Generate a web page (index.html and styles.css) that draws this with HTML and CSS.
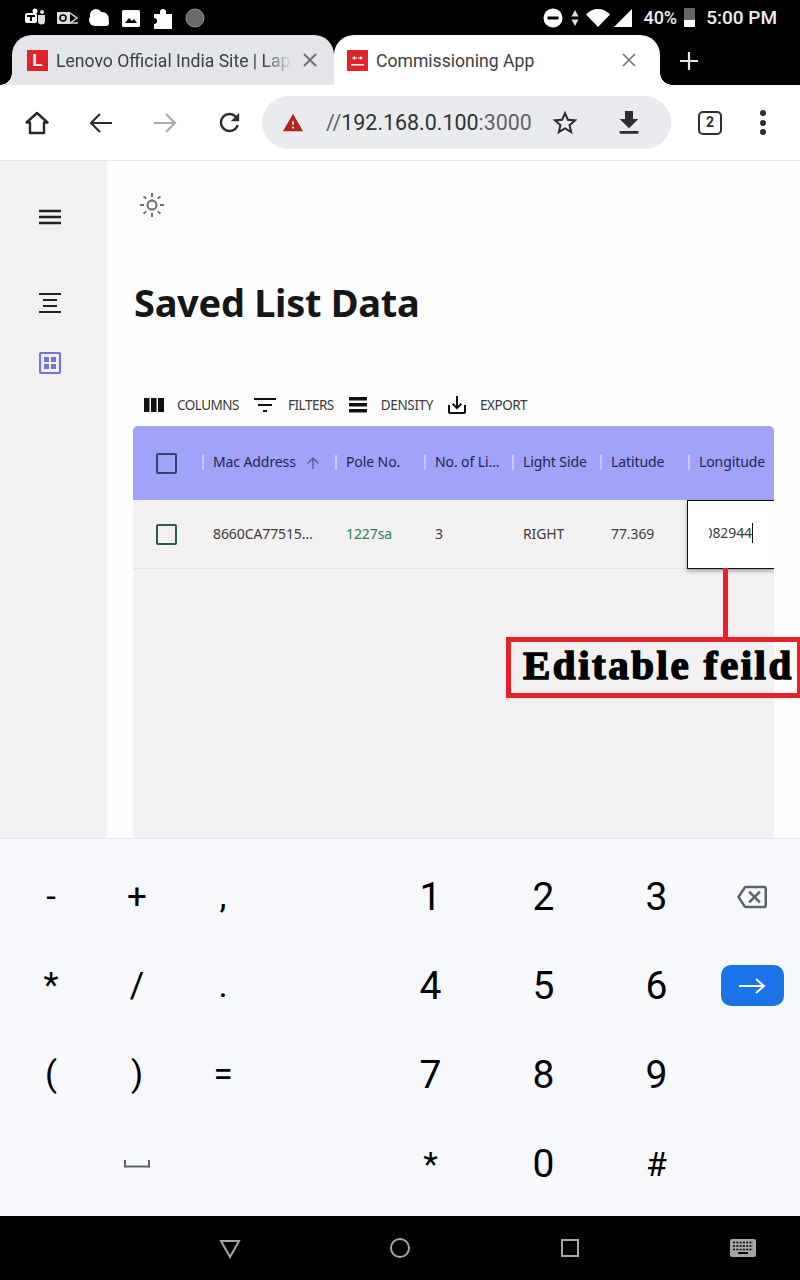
FILE: index.html
```html
<!DOCTYPE html>
<html lang="en">
<head>
    <meta charset="UTF-8">
    <meta name="viewport" content="width=device-width, initial-scale=1.0">
    <title>Commissioning App</title>
    <link rel="stylesheet" href="styles.css">
</head>
<body>
    <!-- Android status bar -->
    <header class="status-bar">
        <svg class="status-icon" viewBox="0 0 22 22"><rect x="1" y="6" width="12" height="10" rx="2" fill="#fff"/><circle cx="11" cy="4" r="2.5" fill="#fff"/><path d="M14 8h7v6a3.500 3.500 0 0 1-7 0z" fill="#ddd"/><circle cx="18" cy="5" r="2" fill="#ddd"/><rect x="3" y="8" width="8" height="2" fill="#000"/><rect x="6" y="8" width="2" height="6" fill="#000"/></svg>
        <svg class="status-icon" viewBox="0 0 22 22"><rect x="1" y="5" width="13" height="12" fill="#ddd"/><circle cx="7" cy="11" r="3" fill="none" stroke="#000" stroke-width="1.500"/><path d="M14 6l7 5-7 5" fill="none" stroke="#ddd" stroke-width="1.500"/><path d="M14 16h8" stroke="#ddd" stroke-width="1.500"/></svg>
        <svg class="status-icon" viewBox="0 0 22 22"><circle cx="8" cy="8" r="6" fill="#fff"/><circle cx="7" cy="13" r="6" fill="#fff"/><circle cx="14" cy="12" r="7" fill="#fff"/><rect x="7" y="13" width="14" height="6" rx="3" fill="#fff"/></svg>
        <svg class="status-icon" viewBox="0 0 22 22"><rect x="2" y="3" width="18" height="17" rx="1.500" fill="#fff"/><path d="M5 16l4-5 3 3 2-2 3 4z" fill="#000"/></svg>
        <svg class="status-icon" viewBox="0 0 22 22"><path d="M2 7h6V5a3 3 0 0 1 6 0v2h6v15H2v-5a3 3 0 0 0 0-6z" fill="#fff"/></svg>
        <svg class="status-icon" viewBox="0 0 22 22"><circle cx="11" cy="11" r="9" fill="#6a6a6a" stroke="#9a9a9a" stroke-width="1"/></svg>
        <div class="status-right">
            <svg class="dnd" viewBox="0 0 20 20"><circle cx="10" cy="10" r="9.500" fill="#fff"/><rect x="4.500" y="8.500" width="11" height="3" fill="#000"/></svg>
            <svg class="updown" viewBox="0 0 8 16"><path d="M4 0l3.500 6.500h-7zM4 16L.5 9.500h7z" fill="#ddd"/></svg>
            <svg class="wifi" viewBox="0 0 24 18"><path d="M0 5.500C3 2 7.500 0 12 0s9 2 12 5.500L12 18z" fill="#fff"/></svg>
            <svg class="signal" viewBox="0 0 18 18"><path d="M18 0v18H0z" fill="#fff"/></svg>
            <span class="battery-text">40%</span>
            <div class="battery"><div class="battery-empty"></div></div>
            <span class="clock">5:00 PM</span>
        </div>
    </header>

    <!-- Chrome tabs -->
    <nav class="tab-strip">
        <div class="tab">
            <span class="favicon">L</span>
            <span class="tab-title">Lenovo Official India Site | Lap</span>
            <svg class="tab-close" viewBox="0 0 16 16"><path d="M2 2l12 12M14 2L2 14" stroke="#6f7276" stroke-width="2"/></svg>
        </div>
        <div class="tab tab-active">
            <span class="favicon"><svg viewBox="0 0 21 21" width="21" height="21"><path d="M5 8l3-2v1.500h2v1H8V10zM16 8l-3-2v1.500h-2v1h2V10z" fill="#fff"/><rect x="4" y="14" width="13" height="1.500" fill="#fff"/></svg></span>
            <span class="tab-title">Commissioning App</span>
            <svg class="tab-close" viewBox="0 0 16 16"><path d="M2 2l12 12M14 2L2 14" stroke="#6f7276" stroke-width="1.600"/></svg>
        </div>
        <svg class="new-tab" viewBox="0 0 20 20"><path d="M10 1v18M1 10h18" stroke="#e8e8e8" stroke-width="2.200"/></svg>
    </nav>

    <!-- Chrome toolbar -->
    <div class="toolbar">
        <div class="tool-btn"><svg viewBox="0 0 26 26" width="26" height="26"><path d="M13 3L2.500 12.500H6V23h14V12.500h3.500z" fill="none" stroke="#26282b" stroke-width="2.400" stroke-linejoin="round"/></svg></div>
        <div class="tool-btn"><svg viewBox="0 0 24 24" width="24" height="24"><path d="M23 12H3M11 3l-9 9 9 9" fill="none" stroke="#2b2d30" stroke-width="2.200"/></svg></div>
        <div class="tool-btn"><svg viewBox="0 0 24 24" width="24" height="24"><path d="M1 12h20M13 3l9 9-9 9" fill="none" stroke="#a9abad" stroke-width="2.200"/></svg></div>
        <div class="tool-btn"><svg viewBox="0 0 24 24" width="29" height="29"><path d="M17.650 6.350C16.200 4.900 14.210 4 12 4c-4.420 0-7.990 3.580-7.990 8s3.570 8 7.990 8c3.730 0 6.840-2.550 7.730-6h-2.080c-.82 2.330-3.040 4-5.650 4-3.310 0-6-2.690-6-6s2.690-6 6-6c1.660 0 3.140.69 4.220 1.780L13 11h7V4l-2.350 2.350z" fill="#2b2d30"/></svg></div>
        <div class="url-pill">
            <svg class="url-warning" viewBox="0 0 24 24"><path d="M1 21h22L12 2 1 21zm12-3h-2v-2h2v2zm0-4h-2v-4h2v4z" fill="#b3261e"/></svg>
            <span class="url-text"><span class="url-dim">//</span>192.168.0.100<span class="url-dim">:3000</span></span>
            <svg class="url-star" viewBox="0 0 24 24"><path d="M22 9.240l-7.190-.62L12 2 9.190 8.630 2 9.240l5.460 4.730L5.820 21 12 17.270 18.180 21l-1.630-7.030L22 9.240zM12 15.400l-3.760 2.270 1-4.280-3.320-2.880 4.380-.38L12 6.100l1.710 4.040 4.380.38-3.320 2.880 1 4.280L12 15.400z" fill="#2b2d30"/></svg>
            <svg class="url-download" viewBox="0 0 24 24"><path d="M19 9h-4V3H9v6H5l7 7 7-7zM5 18v2h14v-2H5z" fill="#2b2d30"/></svg>
        </div>
        <div class="tab-count-btn"><span class="tab-count">2</span></div>
        <div class="dots"><i></i><i></i><i></i></div>
    </div>

    <!-- Page -->
    <div class="app">
        <aside class="sidebar">
            <svg class="side-icon side-menu" viewBox="0 0 22 16"><path d="M0 2h22M0 8h22M0 14h22" stroke="#222" stroke-width="2.400"/></svg>
            <svg class="side-icon side-list" viewBox="0 0 22 22"><path d="M0 2h22M4 8h14M4 14h14M0 20h22" stroke="#222" stroke-width="2.200"/></svg>
            <svg class="side-icon side-grid" viewBox="0 0 22 22"><rect x="1" y="1" width="20" height="20" rx="1.500" fill="none" stroke="#6f74dc" stroke-width="2.200"/><rect x="5" y="5" width="5" height="5" fill="#6f74dc"/><rect x="12" y="5" width="5" height="5" fill="#6f74dc"/><rect x="5" y="12" width="5" height="5" fill="#6f74dc"/><rect x="12" y="12" width="5" height="5" fill="#6f74dc"/></svg>
        </aside>
        <main class="content">
            <svg class="sun" viewBox="0 0 26 26"><circle cx="13" cy="13" r="4.500" fill="none" stroke="#6d6d6d" stroke-width="2"/><path d="M13 1v4M13 21v4M1 13h4M21 13h4M4.500 4.500l2.800 2M21.500 4.500l-2.800 2M4.500 21.500l2.800-2M21.500 21.500l-2.800-2" stroke="#6d6d6d" stroke-width="2"/></svg>
            <h1>Saved List Data</h1>
            <div class="grid-tools">
                <div class="grid-tool">
                    <svg viewBox="0 0 20 14" width="20" height="14"><path d="M0 0h5.500v14H0zM7 0h5.500v14H7zM14 0h6v14h-6z" fill="#111"/></svg>
                    <span>COLUMNS</span>
                </div>
                <div class="grid-tool grid-tool-filters">
                    <svg viewBox="0 0 22 14" width="22" height="14"><path d="M0 0h22v2H0zM4 6h14v2H4zM9 12h4v2H9z" fill="#111"/></svg>
                    <span>FILTERS</span>
                </div>
                <div class="grid-tool grid-tool-density">
                    <svg viewBox="0 0 18 16" width="18" height="16"><path d="M0 0h18v3.500H0zM0 6h18v3.500H0zM0 12h18v3.500H0z" fill="#111"/></svg>
                    <span>DENSITY</span>
                </div>
                <div class="grid-tool grid-tool-export">
                    <svg viewBox="0 0 24 24" width="24" height="24"><path d="M19 12v7H5v-7H3v7c0 1.100.9 2 2 2h14c1.100 0 2-.9 2-2v-7h-2zm-6 .67l2.590-2.580L17 11.500l-5 5-5-5 1.410-1.410L11 12.670V3h2z" fill="#111"/></svg>
                    <span>EXPORT</span>
                </div>
            </div>

            <div class="data-grid">
                <div class="grid-row grid-head">
                    <div class="cell cell-check"><span class="checkbox"></span></div>
                    <div class="cell head-cell">Mac Address
                        <svg class="sort-arrow" viewBox="0 0 24 24"><path d="M4 12l1.410 1.410L11 7.830V20h2V7.830l5.580 5.590L20 12l-8-8-8 8z" fill="#5d6099"/></svg>
                    </div>
                    <div class="cell head-cell">Pole No.</div>
                    <div class="cell head-cell">No. of Li…</div>
                    <div class="cell head-cell">Light Side</div>
                    <div class="cell head-cell">Latitude</div>
                    <div class="cell head-cell">Longitude</div>
                </div>
                <div class="grid-row grid-body-row">
                    <div class="cell cell-check"><span class="checkbox checkbox-green"></span></div>
                    <div class="cell">8660CA77515…</div>
                    <div class="cell cell-link">1227sa</div>
                    <div class="cell">3</div>
                    <div class="cell">RIGHT</div>
                    <div class="cell">77.369</div>
                    <div class="cell cell-edit"><div class="edit-clip"><span class="edit-value">082944</span></div></div>
                </div>
            </div>
        </main>

        <!-- Annotation over the screenshot -->
        <div class="note-line"></div>
        <div class="note-box">Editable feild</div>
    </div>

    <!-- On-screen keyboard -->
    <section class="keyboard">
        <div class="key sym">-</div>
        <div class="key sym">+</div>
        <div class="key sym">,</div>
        <div class="key-gap"></div>
        <div class="key num">1</div>
        <div class="key num">2</div>
        <div class="key num">3</div>
        <div class="key"><svg class="backspace" viewBox="0 0 24 24"><path d="M22 3H7c-.69 0-1.230.35-1.590.88L0 12l5.410 8.110c.36.53.9.89 1.590.89h15c1.100 0 2-.9 2-2V5c0-1.100-.9-2-2-2zm0 16H7.070L2.400 12l4.660-7H22v14zm-11.590-2L14 13.410 17.590 17 19 15.590 15.410 12 19 8.410 17.590 7 14 10.590 10.410 7 9 8.410 12.590 12 9 15.590z" fill="#5f6368"/></svg></div>

        <div class="key sym">*</div>
        <div class="key sym">/</div>
        <div class="key sym">.</div>
        <div class="key-gap"></div>
        <div class="key num">4</div>
        <div class="key num">5</div>
        <div class="key num">6</div>
        <div class="key"><div class="enter-key"><svg viewBox="0 0 28 18" width="28" height="18"><path d="M1 9h25M18 2l8 7-8 7" fill="none" stroke="#fff" stroke-width="2"/></svg></div></div>

        <div class="key sym">(</div>
        <div class="key sym">)</div>
        <div class="key sym">=</div>
        <div class="key-gap"></div>
        <div class="key num">7</div>
        <div class="key num">8</div>
        <div class="key num">9</div>
        <div class="key"></div>

        <div class="key"></div>
        <div class="key"><svg class="space-bar" viewBox="0 0 26 8"><path d="M1 0v6.500h24V0" fill="none" stroke="#5f6368" stroke-width="2"/></svg></div>
        <div class="key"></div>
        <div class="key-gap"></div>
        <div class="key sym-big">*</div>
        <div class="key num">0</div>
        <div class="key sym-big">#</div>
        <div class="key"></div>
    </section>

    <!-- Android nav bar -->
    <footer class="nav-bar">
        <svg class="nav-icon" viewBox="0 0 22 22"><path d="M2 4h18L11 20z" fill="none" stroke="#a6a6a6" stroke-width="2"/></svg>
        <svg class="nav-icon" viewBox="0 0 22 22"><circle cx="11" cy="11" r="9" fill="none" stroke="#a6a6a6" stroke-width="2"/></svg>
        <svg class="nav-icon" viewBox="0 0 22 22"><rect x="3" y="3" width="16" height="16" fill="none" stroke="#a6a6a6" stroke-width="2"/></svg>
        <svg class="nav-keyboard" viewBox="0 0 26 18"><rect width="26" height="18" rx="2" fill="#a6a6a6"/><path d="M3 3.500h20M3 7h20M3 10.500h20" stroke="#000" stroke-width="1.500" stroke-dasharray="2 1.300"/><rect x="8" y="13" width="10" height="2" fill="#000"/></svg>
    </footer>
</body>
</html>
```

FILE: styles.css
```css
/* Stile globale */
* {
    box-sizing: border-box;
}
html, body {
    margin: 0;
    padding: 0;
}
body {
    width: 800px;
    height: 1280px;
    overflow: hidden;
    display: flex;
    flex-direction: column;
    font-family: "Noto Sans", sans-serif;
    background-color: #fff;
    color: #222;
}

/* Status bar */
.status-bar {
    height: 35px;
    flex: none;
    background-color: #000;
    display: flex;
    align-items: center;
    gap: 10px;
    padding-left: 24px;
    color: #eee;
    font-family: Roboto, sans-serif;
}
.status-icon {
    width: 22px;
    height: 22px;
}
.status-right {
    margin-left: auto;
    display: flex;
    align-items: center;
    padding-right: 23px;
}
.dnd {
    width: 20px;
    height: 20px;
}
.updown {
    width: 8px;
    height: 16px;
    margin-left: 8px;
}
.wifi {
    width: 24px;
    height: 18px;
    margin-left: 7px;
}
.signal {
    width: 18px;
    height: 18px;
    margin-left: 4px;
}
.battery-text {
    font-size: 18px;
    font-weight: 500;
    margin-left: 11px;
}
.battery {
    width: 11px;
    height: 19px;
    margin-left: 7px;
    background-color: #fff;
    border-radius: 1px;
}
.battery-empty {
    height: 12px;
    background-color: #666;
}
.clock {
    font-size: 19px;
    font-weight: 500;
    margin-left: 11px;
}

/* Tabs */
.tab-strip {
    height: 50px;
    flex: none;
    background-color: #000;
    display: flex;
    padding-left: 12px;
}
.tab {
    position: relative;
    width: 322px;
    display: flex;
    align-items: center;
    padding: 0 16px 0 15px;
    background-color: #e3e5e8;
    border-radius: 20px 20px 0 0;
    font-family: Roboto, sans-serif;
    font-size: 17.600px;
    color: #3c4043;
}
.tab::before {
    content: "";
    position: absolute;
    left: -12px;
    bottom: 0;
    width: 12px;
    height: 12px;
    background: radial-gradient(circle at 0 0, transparent 11.500px, #e3e5e8 12px);
}
.tab-active {
    width: 326px;
    padding: 0 23px 0 13px;
    background-color: #fff;
}
.tab-active::before {
    display: none;
}
.tab-active::after {
    content: "";
    position: absolute;
    right: -12px;
    bottom: 0;
    width: 12px;
    height: 12px;
    background: radial-gradient(circle at 100% 0, transparent 11.500px, #fff 12px);
}
.favicon {
    width: 21px;
    height: 21px;
    flex: none;
    background-color: #e1232a;
    color: #fff;
    font-family: "Liberation Sans", sans-serif;
    font-weight: bold;
    font-size: 17px;
    line-height: 21px;
    text-align: center;
}
.tab-title {
    flex: 1;
    margin: 2px 10px 0 8px;
    white-space: nowrap;
    -webkit-mask-image: linear-gradient(to right, #000 88%, transparent 100%);
}
.tab-active .tab-title {
    -webkit-mask-image: none;
}
.tab-close {
    width: 16px;
    height: 16px;
    flex: none;
}
.new-tab {
    width: 20px;
    height: 20px;
    align-self: center;
    margin: 2px 0 0 19px;
}

/* Toolbar */
.toolbar {
    height: 76px;
    flex: none;
    display: flex;
    align-items: center;
    padding-left: 5px;
    border-bottom: 1px solid #e6e6e6;
    background-color: #fff;
}
.tool-btn {
    width: 64px;
    display: flex;
    justify-content: center;
}
.url-pill {
    width: 409px;
    height: 53px;
    margin-left: 1px;
    display: flex;
    align-items: center;
    background-color: #e9ebef;
    border-radius: 27px;
    padding-left: 20px;
    font-family: Roboto, sans-serif;
    font-size: 21.400px;
    color: #2f3134;
}
.url-warning {
    width: 22px;
    height: 22px;
    flex: none;
}
.url-text {
    margin-left: 22px;
    white-space: nowrap;
}
.url-dim {
    color: #5f6368;
}
.url-star {
    width: 30px;
    height: 30px;
    margin-left: 18px;
    flex: none;
}
.url-download {
    width: 32px;
    height: 32px;
    margin-left: 33px;
    flex: none;
}
.tab-count-btn {
    width: 78px;
    display: flex;
    justify-content: center;
}
.tab-count {
    width: 24px;
    height: 24px;
    border: 2.500px solid #2b2d30;
    border-radius: 5px;
    font-family: Roboto, sans-serif;
    font-size: 14px;
    font-weight: 700;
    line-height: 19px;
    text-align: center;
    color: #2b2d30;
}
.dots {
    width: 28px;
    display: flex;
    flex-direction: column;
    align-items: center;
    gap: 3.500px;
}
.dots i {
    width: 6px;
    height: 6px;
    border-radius: 50%;
    background-color: #2b2d30;
}

/* Page */
.app {
    position: relative;
    flex: 1;
    display: flex;
    min-height: 0;
    overflow: hidden;
}
.sidebar {
    width: 107px;
    flex: none;
    background-color: #f2f0f1;
    display: flex;
    flex-direction: column;
    align-items: center;
    padding: 48px 7px 0 0;
}
.side-icon {
    width: 22px;
    flex: none;
}
.side-menu {
    height: 16px;
}
.side-list {
    height: 22px;
    margin-top: 67px;
}
.side-grid {
    height: 22px;
    margin-top: 38px;
}
.content {
    flex: 1;
    min-width: 0;
    display: flex;
    flex-direction: column;
    padding: 31px 26px 0;
    background-color: #fdfdfd;
}
.sun {
    width: 26px;
    height: 26px;
    margin-left: 6px;
    flex: none;
}
.content h1 {
    margin: 59px 0 1px 1px;
    font-size: 38px;
    line-height: 50px;
    font-weight: 700;
    letter-spacing: -0.3px;
    color: #161616;
}
.grid-tools {
    display: flex;
    align-items: center;
    height: 24px;
    margin-top: 65px;
    padding-left: 11px;
    font-size: 13.500px;
    color: #3a3a3a;
}
.grid-tool {
    display: flex;
    align-items: center;
    gap: 13px;
    margin-right: 15px;
}
.grid-tool span {
    letter-spacing: -0.5px;
}
.grid-tool-filters {
    gap: 12px;
}
.grid-tool-density {
    gap: 14px;
}
.grid-tool-density span {
    letter-spacing: -0.35px;
}
.grid-tool-export {
    margin-left: -3px;
    gap: 11px;
}
.data-grid {
    flex: 1;
    margin-top: 9px;
    background-color: #f2f0f1;
    border-radius: 5px 5px 0 0;
    overflow: hidden;
    font-size: 14px;
}
.grid-row {
    display: grid;
    grid-template-columns: 68px 133px 89px 88px 88px 88px 87px;
}
.grid-head {
    height: 74px;
    background-color: #a0a3f7;
    color: #23264f;
}
.grid-body-row {
    height: 69px;
    border-bottom: 1px solid #e2e0e1;
    color: #3d3d3d;
}
.cell {
    display: flex;
    align-items: center;
    padding: 0 0 3px 12px;
    white-space: nowrap;
    overflow: hidden;
    letter-spacing: -0.1px;
}
.cell-check {
    justify-content: center;
    padding: 0 1px 0 0;
}
.head-cell {
    position: relative;
}
.head-cell::before {
    content: "";
    position: absolute;
    left: 1px;
    top: 29px;
    width: 2px;
    height: 15px;
    background-color: #c9cbf3;
}
.sort-arrow {
    width: 18px;
    height: 18px;
    margin: 3px 0 0 8px;
}
.checkbox {
    width: 21px;
    height: 21px;
    border: 2.500px solid #27476f;
    border-radius: 2px;
}
.checkbox-green {
    border-color: #2c5a50;
}
.cell-link {
    color: #2e7d5b;
}
.cell-edit {
    padding: 0 0 3px 0;
    justify-content: flex-start;
    background-color: #fff;
    border: 1px solid #111;
    border-right: 0;
    height: 69px;
    box-shadow: 0 2px 4px rgba(0, 0, 0, 0.35);
}
.edit-clip {
    width: 44px;
    margin-left: 21px;
    display: flex;
    justify-content: flex-end;
    overflow: hidden;
}
.edit-value {
    flex: none;
    line-height: 20px;
    border-right: 1px solid #111;
}

/* Annotazione */
.note-line {
    position: absolute;
    left: 723px;
    top: 407px;
    width: 5px;
    height: 72px;
    background-color: #e8202a;
}
.note-box {
    position: absolute;
    left: 506px;
    top: 476px;
    width: 294px;
    height: 61px;
    border: 5px solid #e8202a;
    border-right-width: 3px;
    padding-left: 12px;
    font-family: "Liberation Serif", serif;
    font-size: 41px;
    font-weight: bold;
    line-height: 47px;
    letter-spacing: 2.500px;
    white-space: nowrap;
    color: #000;
    -webkit-text-stroke: 1.500px #000;
}

/* Tastiera */
.keyboard {
    height: 378px;
    flex: none;
    display: grid;
    grid-template-columns: 86px 86px 86px 108px 113px 113px 113px 78px;
    grid-template-rows: repeat(4, 89px);
    padding: 13px 0 0 8px;
    background-color: #f7f8fb;
    border-top: 1px solid #e6e7ea;
    font-family: Roboto, sans-serif;
    color: #000;
}
.key {
    display: flex;
    align-items: center;
    justify-content: center;
}
.num {
    font-size: 39px;
}
.sym {
    font-size: 35px;
}
.sym-big {
    font-size: 34px;
}
.backspace {
    width: 30px;
    height: 30px;
}
.enter-key {
    width: 63px;
    height: 41px;
    display: flex;
    align-items: center;
    justify-content: center;
    background-color: #1a73e8;
    border-radius: 10px;
}
.space-bar {
    width: 26px;
    height: 8px;
}

/* Nav bar */
.nav-bar {
    height: 64px;
    flex: none;
    background-color: #000;
    display: flex;
    align-items: center;
    gap: 148px;
    padding-left: 219px;
}
.nav-icon {
    width: 22px;
    height: 22px;
}
.nav-keyboard {
    width: 26px;
    height: 18px;
    margin-left: 1px;
}
```
